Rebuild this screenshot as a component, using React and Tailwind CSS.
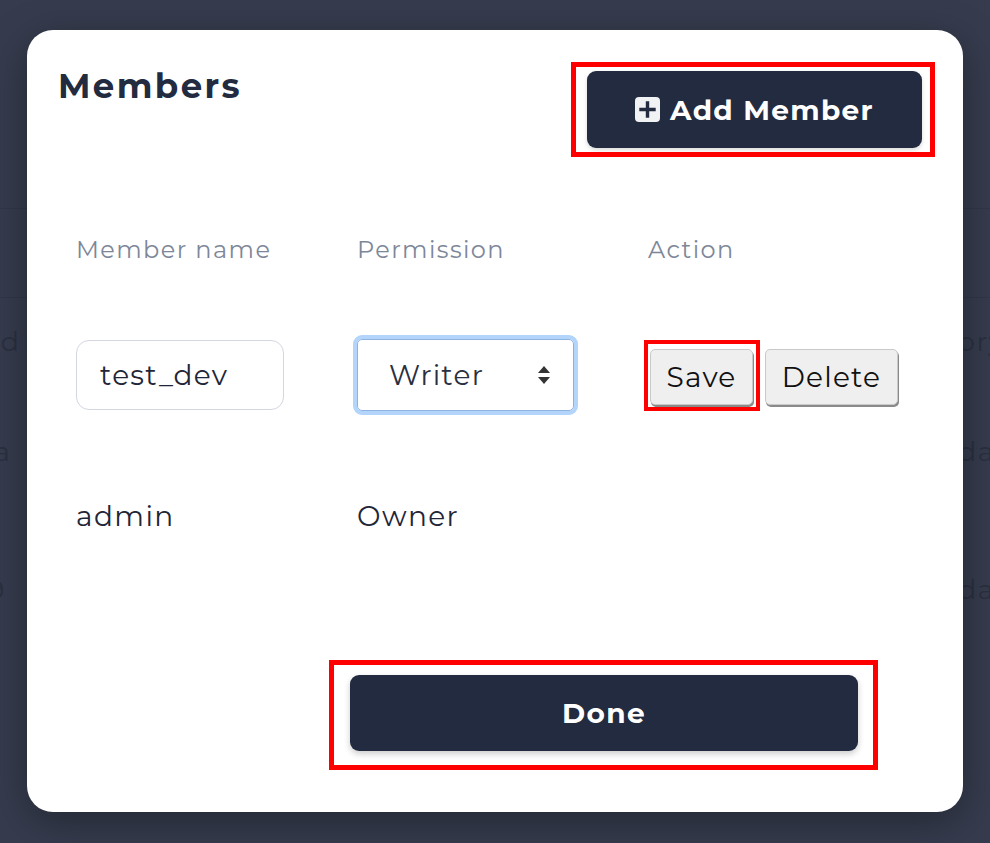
import React from "react";

const font = { fontFamily: "Montserrat, 'Noto Sans', 'Open Sans', sans-serif" };

function PlusSquare() {
  return (
    <svg width="25" height="25" viewBox="0 0 25 25" className="shrink-0">
      <rect x="0" y="0" width="25" height="25" rx="4" fill="#f1f2f4" />
      <path d="M12.5 6v13M6 12.5h13" stroke="#222b40" strokeWidth="3.4" strokeLinecap="square" />
    </svg>
  );
}

export default function App() {
  return (
    <div className="relative w-[990px] h-[843px] overflow-hidden bg-[#363c4e]" style={font}>
      {/* faint page behind the overlay */}
      <div className="absolute inset-0 text-[27px] tracking-[1.5px] text-[#2b303f]">
        <div className="absolute left-0 right-0 top-[208px] h-px bg-[#31364a]" />
        <div className="absolute left-0 right-0 top-[297px] h-px bg-[#31364a]" />
        <div className="absolute left-[-8px] top-[322px]">id</div>
        <div className="absolute left-[-6px] top-[432px]">a</div>
        <div className="absolute left-[-12px] top-[570px]">9</div>
        <div className="absolute left-[958px] top-[322px]">ory</div>
        <div className="absolute left-[958px] top-[432px]">da</div>
        <div className="absolute left-[958px] top-[570px]">da</div>
      </div>

      <div className="relative ml-[27px] mt-[30px] w-[936px] h-[782px] rounded-[26px] bg-white shadow-[0_10px_40px_rgba(0,0,0,0.35)] flex flex-col">
        {/* header */}
        <div className="flex justify-between items-start pl-[31px] pr-[28px] pt-[32px]">
          <h2 className="text-[34px] leading-[48px] font-bold text-[#222b40] tracking-[2.4px]">Members</h2>
          <div className="border-[5px] border-[#ff0000] pl-[11px] pr-[8px] py-[4px]">
            <button className="w-[335px] h-[77px] rounded-[9px] bg-[#222b40] text-white text-[28px] font-bold tracking-[1.3px] flex items-center justify-center gap-[10px] shadow-[0_2px_4px_rgba(0,0,0,0.15)]">
              <PlusSquare />
              <span>Add Member</span>
            </button>
          </div>
        </div>

        {/* table */}
        <div className="grid grid-cols-[281px_291px_1fr] pl-[49px] mt-[73px] text-[24px] tracking-[1.4px]">
          <div className="text-[#7d8799] h-[40px] flex items-center">Member name</div>
          <div className="text-[#7d8799] h-[40px] flex items-center">Permission</div>
          <div className="text-[#7d8799] h-[40px] flex items-center">Action</div>

          <div className="mt-[65px] h-[80px] flex items-center">
            <div className="w-[208px] h-[70px] rounded-[13px] border border-[#d3d7e2] flex items-center pl-[23px] text-[28px] tracking-[1.3px] text-[#1f2638]">test_dev</div>
          </div>
          <div className="mt-[65px] h-[80px] flex items-center -ml-[4px]">
            <div className="w-[225px] h-[80px] rounded-[9px] border-[4px] border-[#b3d5fb] flex">
              <div className="flex-1 rounded-[5px] border border-[#8fb3e0] flex items-center justify-between pl-[31px] pr-[22px] text-[28px] tracking-[1.3px] text-[#2a3040]">
                <span>Writer</span>
                <svg width="14" height="22" viewBox="0 0 14 22">
                  <path d="M7 2 L13 9 H1 Z" fill="#333" />
                  <path d="M7 20 L13 13 H1 Z" fill="#333" />
                </svg>
              </div>
            </div>
          </div>
          <div className="mt-[65px] h-[80px] flex items-center -ml-[4px] gap-[5px]">
            <div className="border-[4px] border-[#ff0000] pl-[2px] pr-[3px] pt-[5px] pb-[2px]">
              <button className="w-[103px] h-[56px] rounded-[5px] bg-[#efefef] border border-[#c9c9c9] shadow-[1px_2px_0_#8a8a8a] text-[28px] tracking-[1.2px] text-[#111]">Save</button>
            </div>
            <button className="w-[133px] h-[56px] rounded-[5px] bg-[#efefef] border border-[#c9c9c9] shadow-[1px_2px_0_#8a8a8a] text-[28px] tracking-[1.2px] text-[#111] mt-[3px]">Delete</button>
          </div>

          <div className="mt-[81px] h-[40px] flex items-center text-[28px] tracking-[1.4px] text-[#1f2638]">admin</div>
          <div className="mt-[81px] h-[40px] flex items-center text-[28px] tracking-[1.4px] text-[#1f2638]">Owner</div>
          <div className="mt-[81px] h-[40px]" />
        </div>

        {/* footer */}
        <div className="mt-auto mb-[42px] ml-[302px] w-[549px] border-[5px] border-[#ff0000] pl-[16px] pr-[15px] pt-[10px] pb-[14px]">
          <button className="w-[508px] h-[76px] rounded-[9px] bg-[#222b40] text-white text-[28px] font-bold tracking-[1.4px] shadow-[0_3px_6px_rgba(0,0,0,0.2)]">Done</button>
        </div>
      </div>
    </div>
  );
}
